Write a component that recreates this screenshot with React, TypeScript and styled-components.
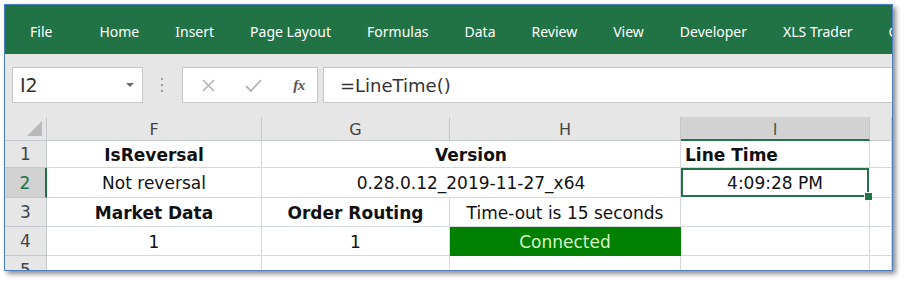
import React from 'react'
import styled, { createGlobalStyle, css } from 'styled-components'

const GlobalStyle = createGlobalStyle`
  html, body {
    margin: 0;
    padding: 0;
    background: #ffffff;
  }
  * {
    box-sizing: border-box;
  }
`

const Page = styled.div`
  padding: 4px 0 0 4px;
  width: 907px;
  height: 283px;
  overflow: hidden;
`

const Window = styled.div`
  width: 889px;
  height: 267px;
  border: 1px solid #4f7ec2;
  box-shadow: 3px 3px 5px rgba(0, 0, 0, 0.45);
  overflow: hidden;
  display: flex;
  flex-direction: column;
  background: #e6e6e6;
`

const Ribbon = styled.div`
  flex: 0 0 49px;
  display: flex;
  align-items: center;
  gap: 36px;
  padding: 3px 0 0 25px;
  background: #217346;
  white-space: nowrap;
  overflow: hidden;
`

const Tab = styled.span<{ $first?: boolean }>`
  font-family: 'Noto Sans', 'Open Sans', sans-serif;
  font-size: 14px;
  color: #ffffff;
  ${(p) => p.$first && css`margin-right: 11px;`}
`

const FormulaStrip = styled.div`
  flex: 0 0 63px;
  display: flex;
  align-items: flex-start;
  padding: 13px 0 0 7px;
  background: #e6e6e6;
`

const Box = styled.div`
  height: 36px;
  background: #ffffff;
  border: 1px solid #c6c6c6;
  display: flex;
  align-items: center;
`

const NameBox = styled(Box)`
  width: 131px;
  padding: 0 8px 0 7px;
  justify-content: space-between;
`

const NameText = styled.span`
  font-family: 'DejaVu Sans', sans-serif;
  font-size: 19px;
  color: #333333;
`

const DropArrow = styled.span`
  width: 0;
  height: 0;
  border-left: 4px solid transparent;
  border-right: 4px solid transparent;
  border-top: 4px solid #6b6b6b;
`

const Grip = styled.div`
  width: 39px;
  height: 36px;
  display: flex;
  flex-direction: column;
  align-items: center;
  justify-content: center;
  gap: 4px;
  padding-right: 2px;

  span {
    width: 2px;
    height: 2px;
    background: #9a9a9a;
  }
`

const ButtonBox = styled(Box)`
  width: 136px;
  padding: 0 9px 0 16px;
  justify-content: space-between;
`

const IconBtn = styled.span`
  display: flex;
  align-items: center;
  justify-content: center;
  width: 18px;
  height: 18px;
`

const FxLabel = styled.span`
  font-family: 'Liberation Serif', 'DejaVu Serif', serif;
  font-style: italic;
  font-weight: bold;
  font-size: 15px;
  color: #555555;
  letter-spacing: -0.5px;
`

const FormulaInput = styled(Box)`
  flex: 1;
  margin-left: 5px;
  border-right: none;
  padding-left: 16px;
  font-family: 'DejaVu Sans', sans-serif;
  font-size: 18px;
  color: #333333;
`

const Sheet = styled.div`
  display: grid;
  grid-template-columns: 42px 215px 188px 231px 189px 1fr;
  grid-template-rows: 24px 27px 30px 29px 29px 29px;
  background: #ffffff;
  font-family: 'DejaVu Sans', sans-serif;
`

const Corner = styled.div`
  background: #e6e6e6;
  border-right: 1px solid #c4c8ce;
  border-bottom: 1px solid #c4c8ce;
  display: flex;
  align-items: flex-end;
  justify-content: flex-end;
  padding: 0 4px 4px 0;
`

const ColHead = styled.div<{ $active?: boolean }>`
  background: ${(p) => (p.$active ? '#d2d2d2' : '#e6e6e6')};
  border-right: 1px solid #c4c8ce;
  border-bottom: ${(p) => (p.$active ? '2px solid #217346' : '1px solid #c4c8ce')};
  display: flex;
  align-items: center;
  justify-content: center;
  padding-top: 2px;
  font-size: 16px;
  color: ${(p) => (p.$active ? '#3d5f4a' : '#444444')};
`

const RowHead = styled.div<{ $active?: boolean }>`
  background: ${(p) => (p.$active ? '#d2d2d2' : '#e6e6e6')};
  border-right: ${(p) => (p.$active ? '2px solid #217346' : '1px solid #c4c8ce')};
  border-bottom: 1px solid #c4c8ce;
  display: flex;
  align-items: center;
  justify-content: center;
  font-size: 17px;
  color: ${(p) => (p.$active ? '#217346' : '#444444')};
`

const Cell = styled.div<{
  $span?: number
  $bold?: boolean
  $left?: boolean
  $fill?: boolean
  $selected?: boolean
}>`
  grid-column: span ${(p) => p.$span || 1};
  display: flex;
  align-items: center;
  justify-content: ${(p) => (p.$left ? 'flex-start' : 'center')};
  padding: 1px 4px 0;
  border-right: 1px solid #d4d8de;
  border-bottom: 1px solid #d4d8de;
  font-size: 17px;
  font-weight: ${(p) => (p.$bold ? 'bold' : 'normal')};
  color: #111111;
  white-space: nowrap;
  overflow: visible;
  ${(p) =>
    p.$fill &&
    css`
      background: #008000;
      color: #d8f5c8;
      border-color: #008000;
    `}
  ${(p) =>
    p.$selected &&
    css`
      position: relative;
      z-index: 2;
      box-shadow: inset 0 0 0 2px #217346;
      border-color: transparent;

      &::after {
        content: '';
        position: absolute;
        right: -4px;
        bottom: -4px;
        width: 7px;
        height: 7px;
        background: #217346;
        border: 1px solid #ffffff;
      }
    `}
`

const tabs = [
  'Home',
  'Insert',
  'Page Layout',
  'Formulas',
  'Data',
  'Review',
  'View',
  'Developer',
  'XLS Trader',
  'Get Add-ins',
]

const App = () => {
  return (
    <Page>
      <GlobalStyle />
      <Window>
        <Ribbon>
          <Tab $first>File</Tab>
          {tabs.map((t) => (
            <Tab key={t}>{t}</Tab>
          ))}
        </Ribbon>

        <FormulaStrip>
          <NameBox>
            <NameText>I2</NameText>
            <DropArrow />
          </NameBox>
          <Grip>
            <span />
            <span />
            <span />
          </Grip>
          <ButtonBox>
            <IconBtn>
              <svg width="13" height="13" viewBox="0 0 13 13">
                <path d="M1 1 L12 12 M12 1 L1 12" stroke="#b4b4b4" strokeWidth="1.6" fill="none" />
              </svg>
            </IconBtn>
            <IconBtn>
              <svg width="17" height="13" viewBox="0 0 17 13">
                <path d="M1 7 L6 12 L16 1" stroke="#b4b4b4" strokeWidth="1.8" fill="none" />
              </svg>
            </IconBtn>
            <IconBtn>
              <FxLabel>fx</FxLabel>
            </IconBtn>
          </ButtonBox>
          <FormulaInput>=LineTime()</FormulaInput>
        </FormulaStrip>

        <Sheet>
          <Corner>
            <svg width="15" height="15" viewBox="0 0 15 15">
              <polygon points="15,0 15,15 0,15" fill="#b9b9b9" />
            </svg>
          </Corner>
          <ColHead>F</ColHead>
          <ColHead>G</ColHead>
          <ColHead>H</ColHead>
          <ColHead $active>I</ColHead>
          <ColHead />

          <RowHead>1</RowHead>
          <Cell $bold>IsReversal</Cell>
          <Cell $bold $span={2}>Version</Cell>
          <Cell $bold $left>Line Time</Cell>
          <Cell />

          <RowHead $active>2</RowHead>
          <Cell>Not reversal</Cell>
          <Cell $span={2}>0.28.0.12_2019-11-27_x64</Cell>
          <Cell $selected>4:09:28 PM</Cell>
          <Cell />

          <RowHead>3</RowHead>
          <Cell $bold>Market Data</Cell>
          <Cell $bold>Order Routing</Cell>
          <Cell>Time-out is 15 seconds</Cell>
          <Cell />
          <Cell />

          <RowHead>4</RowHead>
          <Cell>1</Cell>
          <Cell>1</Cell>
          <Cell $fill>Connected</Cell>
          <Cell />
          <Cell />

          <RowHead>5</RowHead>
          <Cell />
          <Cell />
          <Cell />
          <Cell />
          <Cell />
        </Sheet>
      </Window>
    </Page>
  )
}

export default App
